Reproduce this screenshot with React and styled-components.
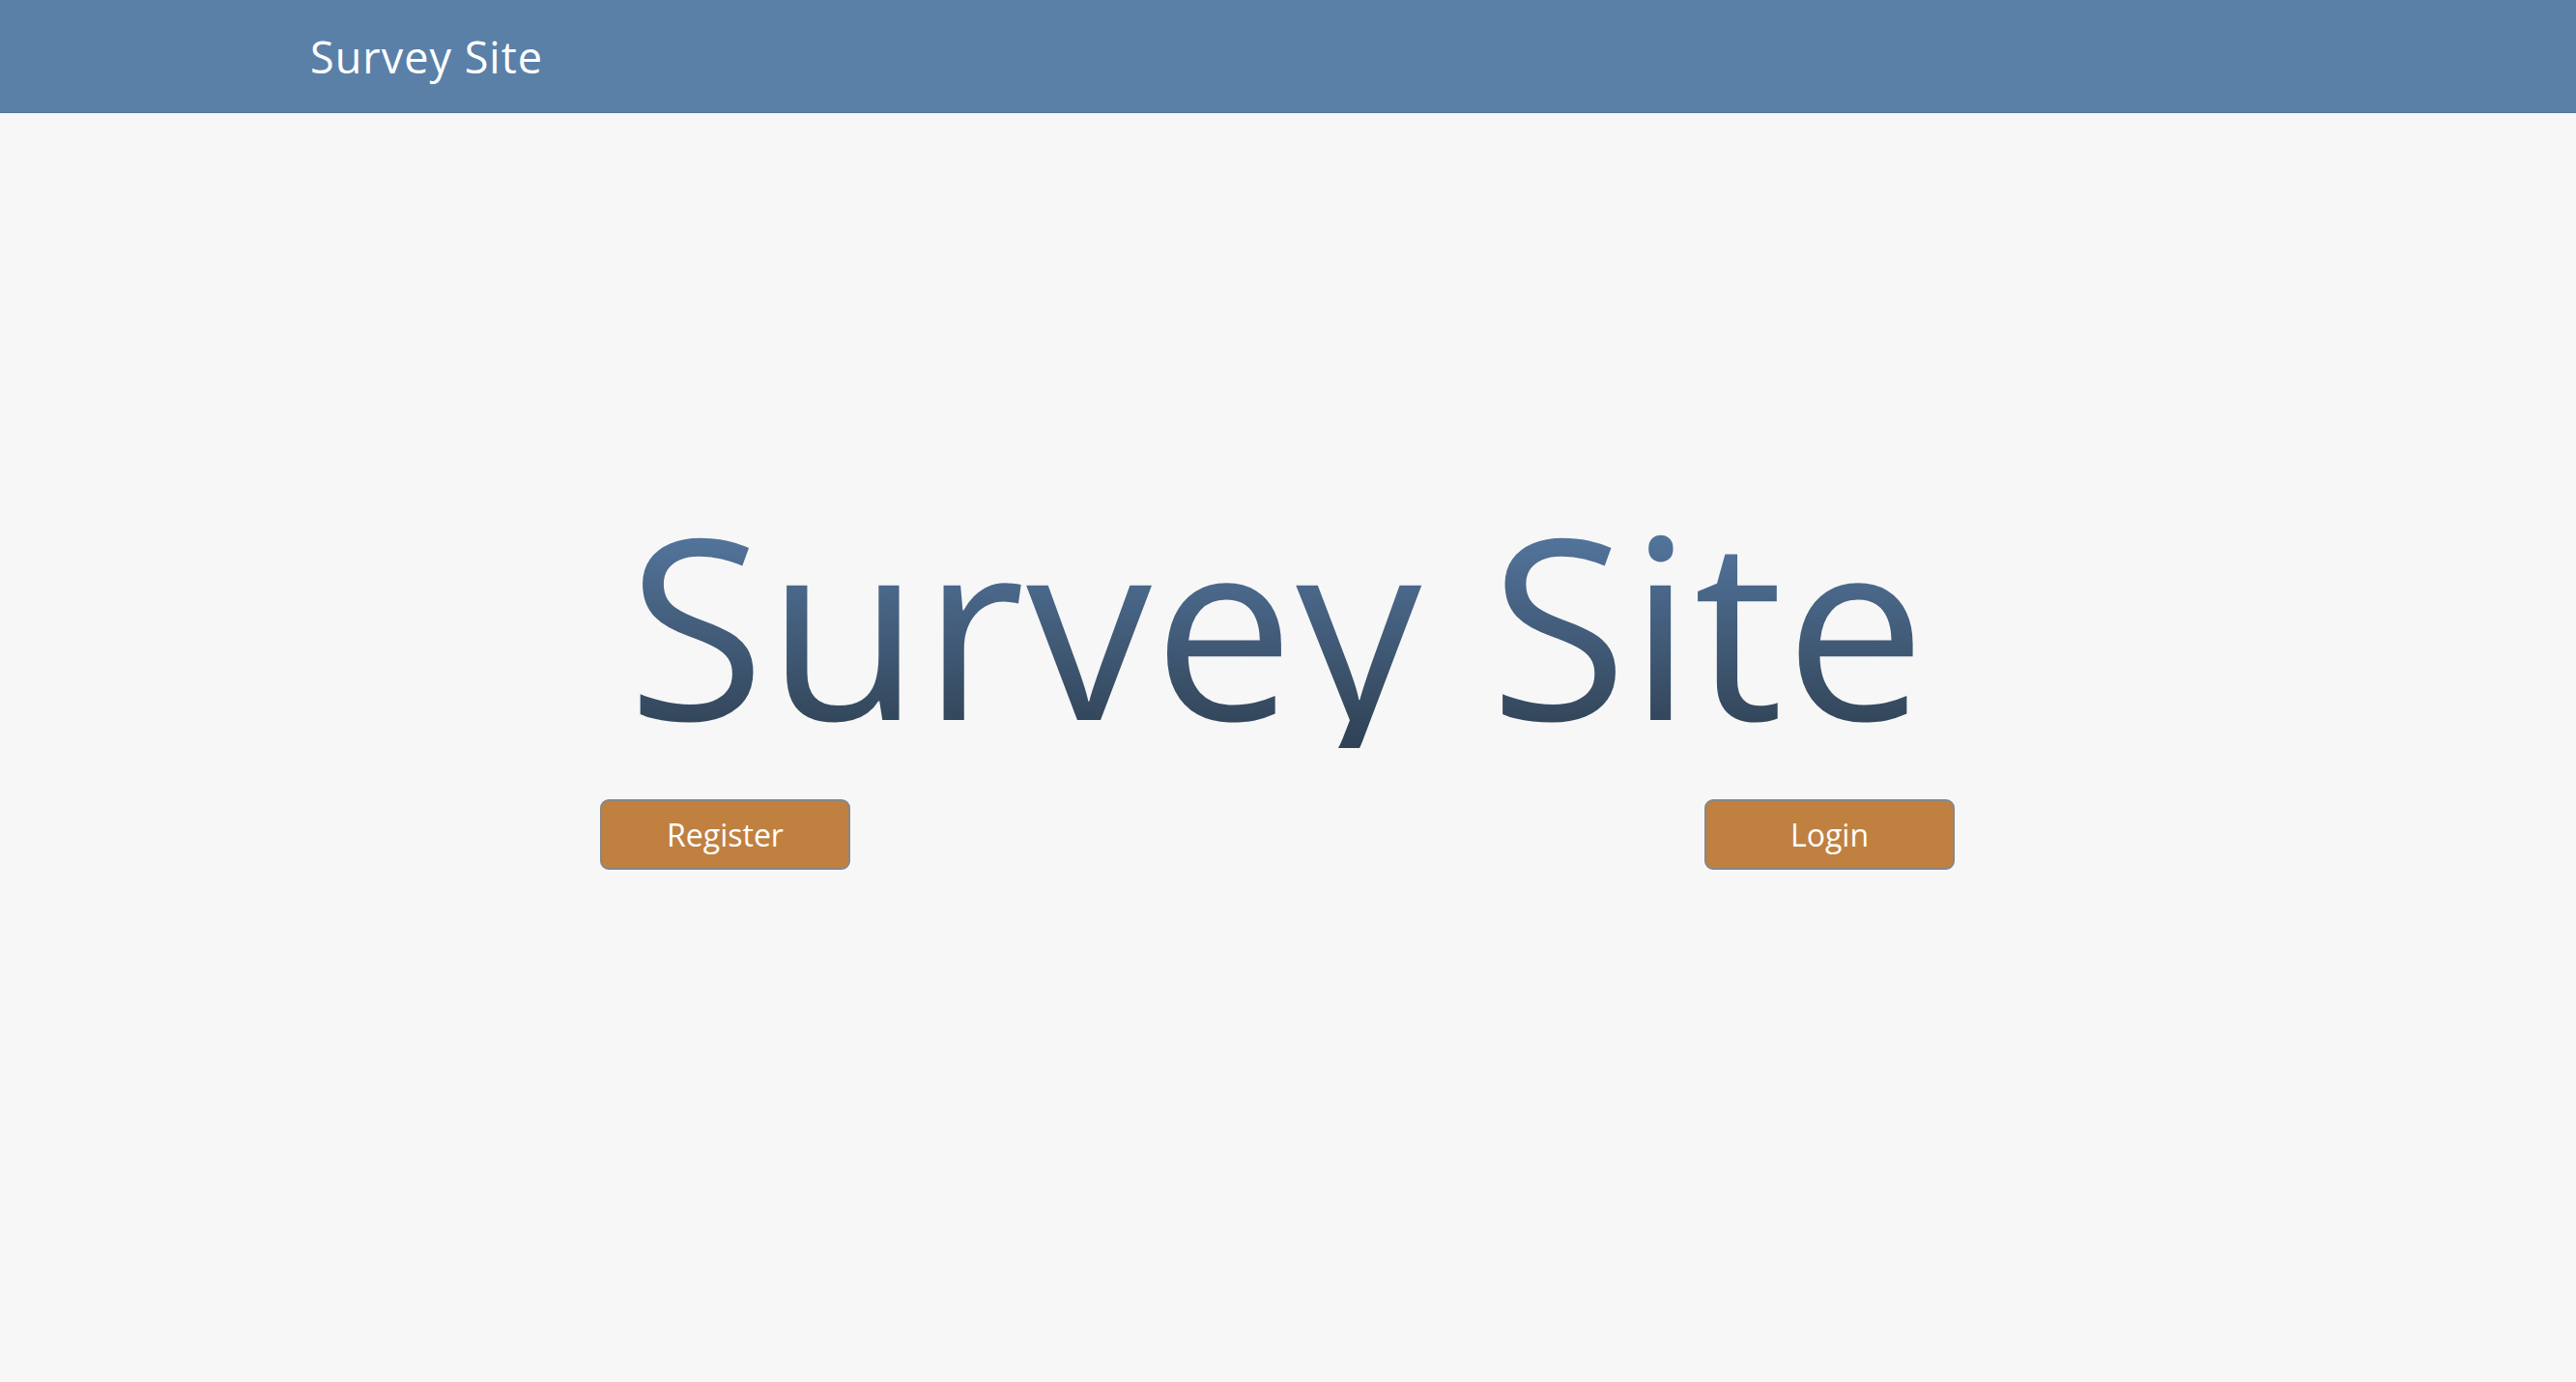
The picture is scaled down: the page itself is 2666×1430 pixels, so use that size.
/* =============================================================================
                              MODULE IMPORTS & CONFIGURATION.
============================================================================= */
import styled, { createGlobalStyle } from "styled-components";

/* =============================================================================
                              STYLED COMPONENTS.
============================================================================= */
const GlobalStyle = createGlobalStyle`
  html, body {
    margin: 0;
    padding: 0;
    background: #f7f7f7;
    font-family: "Open Sans", "Noto Sans", sans-serif;
  }
`

const Page = styled.div`
  min-height: 100vh;
  display: flex;
  flex-direction: column;
  background: #f7f7f7;
`

const Navbar = styled.header`
  height: 117px;
  background: #5a80a8;
  display: flex;
  align-items: center;
  padding-left: 321px;
  border-bottom: 1px solid #4f739a;
  box-sizing: border-box;
`

const Brand = styled.span`
  color: #ffffff;
  font-size: 45px;
  letter-spacing: 1px;
`

const Hero = styled.main`
  display: flex;
  flex-direction: column;
  align-items: center;
  padding-top: 397px;
  padding-right: 22px;
`

const Title = styled.h1`
  margin: 0;
  font-size: 260px;
  font-weight: 400;
  line-height: 1;
  letter-spacing: 1.5px;
  background: linear-gradient(to bottom, #5a7ea6 0%, #52739a 17%, #34485d 88%, #2f4257 100%);
  -webkit-background-clip: text;
  background-clip: text;
  color: transparent;
`

const Actions = styled.div`
  width: 1402px;
  margin-top: 53px;
  display: flex;
  justify-content: space-between;
`

const Button = styled.button`
  width: 259px;
  height: 73px;
  box-sizing: border-box;
  background: #c08040;
  border: 2px solid #878787;
  border-radius: 9px;
  color: #ffffff;
  font-family: "Open Sans", "Noto Sans", sans-serif;
  font-size: 32px;
  cursor: pointer;
`

/* ========================================================================
                            MAIN COMPONENT.
======================================================================== */
function App() {
  return (
    <Page>
      <GlobalStyle />
      <Navbar>
        <Brand>Survey Site</Brand>
      </Navbar>

      <Hero>
        <Title>Survey Site</Title>
        <Actions>
          <Button>Register</Button>
          <Button>Login</Button>
        </Actions>
      </Hero>
    </Page>
  )
}

export default App;
